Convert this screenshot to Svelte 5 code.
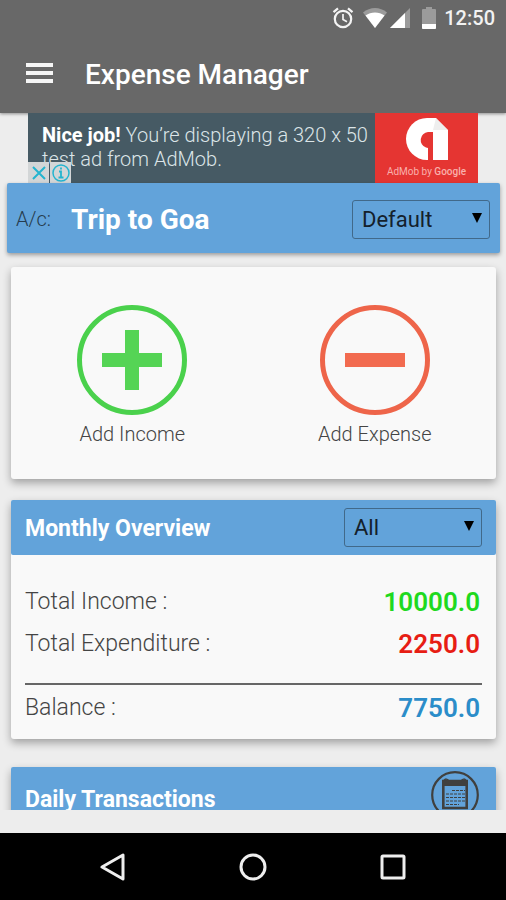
<script>
  let account = $state('Default');
  let period = $state('All');

  const totals = [
    { label: 'Total Income :', value: '10000.0', kind: 'income' },
    { label: 'Total Expenditure :', value: '2250.0', kind: 'expense' },
    { label: 'Balance :', value: '7750.0', kind: 'balance' }
  ];
</script>

<div class="screen">
  <header>
    <div class="status">
      <svg width="24" height="24" viewBox="0 0 24 24" fill="none" stroke="#f4f4f4" aria-label="Alarm">
        <circle cx="12" cy="13" r="8.2" stroke-width="2.2" />
        <path d="M12 8v5.5l4 2.3" stroke-width="1.7" />
        <path d="M2.5 6.2 7 2.4M21.5 6.2 17 2.4" stroke-width="2.2" />
      </svg>
      <svg class="wifi" width="24" height="22" viewBox="0 0 24 22" aria-label="Wi-Fi">
        <path d="M0 5.5C7-.5 17-.5 24 5.5L12 21Z" fill="#9b9b9b" />
        <path d="M2.5 8.5C8 4.5 16 4.5 21.5 8.5L12 21Z" fill="#fff" />
      </svg>
      <svg class="signal" width="20" height="20" viewBox="0 0 20 20" aria-label="Signal">
        <path d="M20 0V20H0Z" fill="#9b9b9b" />
        <path d="M15 5V20H0Z" fill="#fff" />
      </svg>
      <svg class="battery" width="14" height="22" viewBox="0 0 14 22" aria-label="Battery">
        <path d="M4 0h6v2h3q1 0 1 1v18q0 1-1 1H1q-1 0-1-1V3q0-1 1-1h3Z" fill="#9b9b9b" />
        <path d="M0 17h14v4q0 1-1 1H1q-1 0-1-1Z" fill="#fff" />
      </svg>
      <span class="time">12:50</span>
    </div>
    <div class="appbar">
      <button class="menu" aria-label="Open menu">
        <svg width="27" height="20" viewBox="0 0 27 20" fill="#f6f6f6">
          <path d="M0 0h27v4H0zM0 8h27v4H0zM0 16h27v4H0z" />
        </svg>
      </button>
      <h1>Expense Manager</h1>
    </div>
  </header>

  <main>
    <div class="ad">
      <p><b>Nice job!</b> You’re displaying a 320 x 50 test ad from AdMob.</p>
      <div class="admob">
        <svg width="44" height="44" viewBox="0 0 44 44">
          <path d="M22 1H31L43 13V43H22A21 21 0 0 1 22 1Z" fill="#fff" />
          <path d="M28 15H23A8 8 0 0 0 21 30.5L23 31V44H28Z" fill="#e53532" />
          <path d="M28 13H43L31 1Z" fill="#ddd" opacity=".5" />
        </svg>
        <span>AdMob by <b>Google</b></span>
      </div>
      <div class="adchoices">
        <button aria-label="Close ad">
          <svg width="14" height="14" viewBox="0 0 14 14"><path d="M1 1 13 13M13 1 1 13" stroke="#24b4cf" stroke-width="2" /></svg>
        </button>
        <button aria-label="About this ad">
          <svg width="18" height="18" viewBox="0 0 18 18" fill="none" stroke="#24b4cf">
            <circle cx="9" cy="9" r="8" stroke-width="1.5" />
            <path d="M9 3.5v2M7 7.5h2V13M6.5 13.5h5" stroke-width="1.8" />
          </svg>
        </button>
      </div>
    </div>

    <section class="account">
      <label for="account">A/c:</label>
      <h2>Trip to Goa</h2>
      <div class="pick">
        <select id="account" bind:value={account}>
          <option>Default</option>
          <option>Savings</option>
        </select>
        <svg width="10" height="10" viewBox="0 0 10 10"><path d="M0 0H10L5 10Z" /></svg>
      </div>
    </section>

    <section class="card actions">
      <button>
        <svg width="110" height="110" viewBox="0 0 110 110">
          <circle cx="55" cy="55" r="52.5" fill="none" stroke="#4ad14c" stroke-width="5" />
          <path d="M48 25H62V48H85V62H62V85H48V62H25V48H48Z" fill="#55d455" />
        </svg>
        Add Income
      </button>
      <button>
        <svg width="110" height="110" viewBox="0 0 110 110">
          <circle cx="55" cy="55" r="52.5" fill="none" stroke="#ee654a" stroke-width="5" />
          <path d="M25 48H85V62H25Z" fill="#f26b50" />
        </svg>
        Add Expense
      </button>
    </section>

    <section class="card">
      <div class="bar">
        <h3>Monthly Overview</h3>
        <div class="pick">
          <select aria-label="Overview period" bind:value={period}>
            <option>All</option>
            <option>This month</option>
          </select>
          <svg width="10" height="10" viewBox="0 0 10 10"><path d="M0 0H10L5 10Z" /></svg>
        </div>
      </div>
      <dl>
        {#each totals as row}
          <div class={row.kind}>
            <dt>{row.label}</dt>
            <dd>{row.value}</dd>
          </div>
        {/each}
      </dl>
    </section>

    <section class="card">
      <div class="bar daily">
        <h3>Daily Transactions</h3>
        <button aria-label="Open calendar">
          <svg width="48" height="48" viewBox="0 0 48 48" fill="none" stroke="#40403e">
            <circle cx="24" cy="24" r="22.8" stroke-width="2.2" />
            <path d="M12.3 10H35.7V37H12.3Z" stroke-width="2.6" />
            <path d="M11 9H37V15H11Z" fill="#40403e" stroke="none" />
            <path d="M13 9.5Q15 6.5 18 10M30 10Q33 6.5 35 9.5" stroke-width="1.5" />
            <path d="M21 19.5h13M15 23h19M15 26.5h19M15 30h19M15 33.5h13" stroke-width="1" stroke-dasharray="3 1" />
          </svg>
        </button>
      </div>
    </section>
  </main>

  <nav>
    <button aria-label="Back">
      <svg width="28" height="28" viewBox="0 0 28 28"><path d="M3 14 24 2V26Z" /></svg>
    </button>
    <button aria-label="Home">
      <svg width="28" height="28" viewBox="0 0 28 28"><circle cx="14" cy="14" r="12" /></svg>
    </button>
    <button aria-label="Recent apps">
      <svg width="28" height="28" viewBox="0 0 28 28"><rect x="3" y="3" width="22" height="22" rx="1" /></svg>
    </button>
  </nav>
</div>

<style>
  :global(body) {
    margin: 0;
  }
  .screen {
    display: flex;
    flex-direction: column;
    height: 100vh;
    background: #ededed;
    font-family: Roboto, 'Liberation Sans', sans-serif;
    color: #444;
  }
  h1, h2, h3, p, dl, dd {
    margin: 0;
  }
  button {
    padding: 0;
    border: 0;
    background: none;
    font: inherit;
    color: inherit;
    cursor: pointer;
  }
  svg {
    display: block;
  }
  header {
    background: #686868;
    color: #fff;
    box-shadow: 0 1px 3px rgba(0, 0, 0, 0.4);
  }
  .status {
    display: flex;
    align-items: center;
    justify-content: flex-end;
    height: 36px;
    padding-right: 11px;
  }
  .wifi {
    margin-left: 8px;
  }
  .signal {
    margin-left: 3px;
  }
  .battery {
    margin: 0 8px 0 12px;
  }
  .time {
    font-size: 20px;
    font-weight: 500;
    color: #f2f2f2;
  }
  .appbar {
    display: flex;
    align-items: center;
    gap: 32px;
    height: 77px;
    padding: 0 26px;
  }
  .menu {
    padding-bottom: 4px;
  }
  h1 {
    font-size: 28px;
    font-weight: 500;
  }
  main {
    flex: 1;
    min-height: 0;
    margin-bottom: 23px;
    overflow: hidden;
  }
  .ad {
    position: relative;
    display: flex;
    max-width: 450px;
    height: 70px;
    margin: 0 auto;
    background: #465a64;
  }
  .ad p {
    flex: 1;
    padding: 10px 0 0 14px;
    font-size: 20px;
    font-weight: 300;
    line-height: 24px;
    color: #dce5e8;
  }
  .ad p b {
    font-weight: 700;
    color: #fff;
  }
  .admob {
    display: flex;
    flex-direction: column;
    align-items: center;
    gap: 4px;
    width: 103px;
    padding-top: 4px;
    background: #e53532;
    font-size: 10px;
    line-height: 14px;
    color: #f9b0ac;
  }
  .admob b {
    font-weight: 500;
  }
  .adchoices {
    position: absolute;
    left: 0;
    bottom: 0;
    display: flex;
    gap: 1px;
  }
  .adchoices button {
    display: grid;
    place-items: center;
    width: 21px;
    height: 21px;
    background: #d3d6d7;
  }
  .account {
    position: relative;
    display: flex;
    align-items: center;
    height: 70px;
    margin: 0 6px 14px 7px;
    padding: 2px 10px 0 9px;
    border-radius: 2px;
    background: #62a3da;
    box-shadow: 0 2px 4px rgba(0, 0, 0, 0.35);
    box-sizing: border-box;
  }
  .account label {
    width: 55px;
    font-size: 20px;
    font-weight: 300;
    color: #263c4e;
  }
  h2 {
    flex: 1;
    font-size: 28px;
    font-weight: 700;
    color: #fff;
  }
  .pick {
    position: relative;
    width: 138px;
  }
  .pick svg {
    position: absolute;
    right: 8px;
    top: 13px;
    pointer-events: none;
  }
  select {
    display: block;
    width: 100%;
    height: 39px;
    padding: 0 24px 0 9px;
    border: 1px solid #41698a;
    border-radius: 3px;
    appearance: none;
    background: transparent;
    font: 400 22px Roboto, 'Liberation Sans', sans-serif;
    color: #14212c;
  }
  .card {
    margin: 0 10px 21px 11px;
    border-radius: 3px;
    background: #f9f9f9;
    box-shadow: 0 4px 8px rgba(0, 0, 0, 0.32);
  }
  .actions {
    display: flex;
    height: 212px;
  }
  .actions button {
    display: flex;
    flex: 1;
    flex-direction: column;
    align-items: center;
    gap: 6px;
    padding-top: 38px;
    font-size: 20px;
    font-weight: 300;
    line-height: 26px;
  }
  .bar {
    display: flex;
    align-items: center;
    justify-content: space-between;
    height: 55px;
    padding: 0 14px;
    border-radius: 2px;
    background: #62a3da;
  }
  h3 {
    padding-top: 2px;
    font-size: 23px;
    font-weight: 700;
    color: #fff;
  }
  .daily {
    height: 62px;
    padding-right: 17px;
  }
  .daily button {
    margin-bottom: 6px;
  }
  dl {
    padding: 26px 14px 10px;
    margin-bottom: 28px;
    font-size: 23px;
    font-weight: 300;
    line-height: 42px;
  }
  dl div {
    display: flex;
    align-items: center;
    justify-content: space-between;
    padding-right: 2px;
  }
  dd {
    font-size: 26px;
    font-weight: 600;
  }
  .income dd {
    color: #1fd91f;
  }
  .expense dd {
    color: #e71d14;
  }
  .balance {
    margin-top: 18px;
    padding-top: 2px;
    border-top: 2px solid #666;
  }
  .balance dd {
    color: #2b8dc9;
  }
  nav {
    display: flex;
    align-items: center;
    justify-content: center;
    gap: 112px;
    height: 67px;
    background: #000;
  }
  nav svg {
    fill: none;
    stroke: #eee;
    stroke-width: 3;
    stroke-linejoin: round;
  }
</style>
